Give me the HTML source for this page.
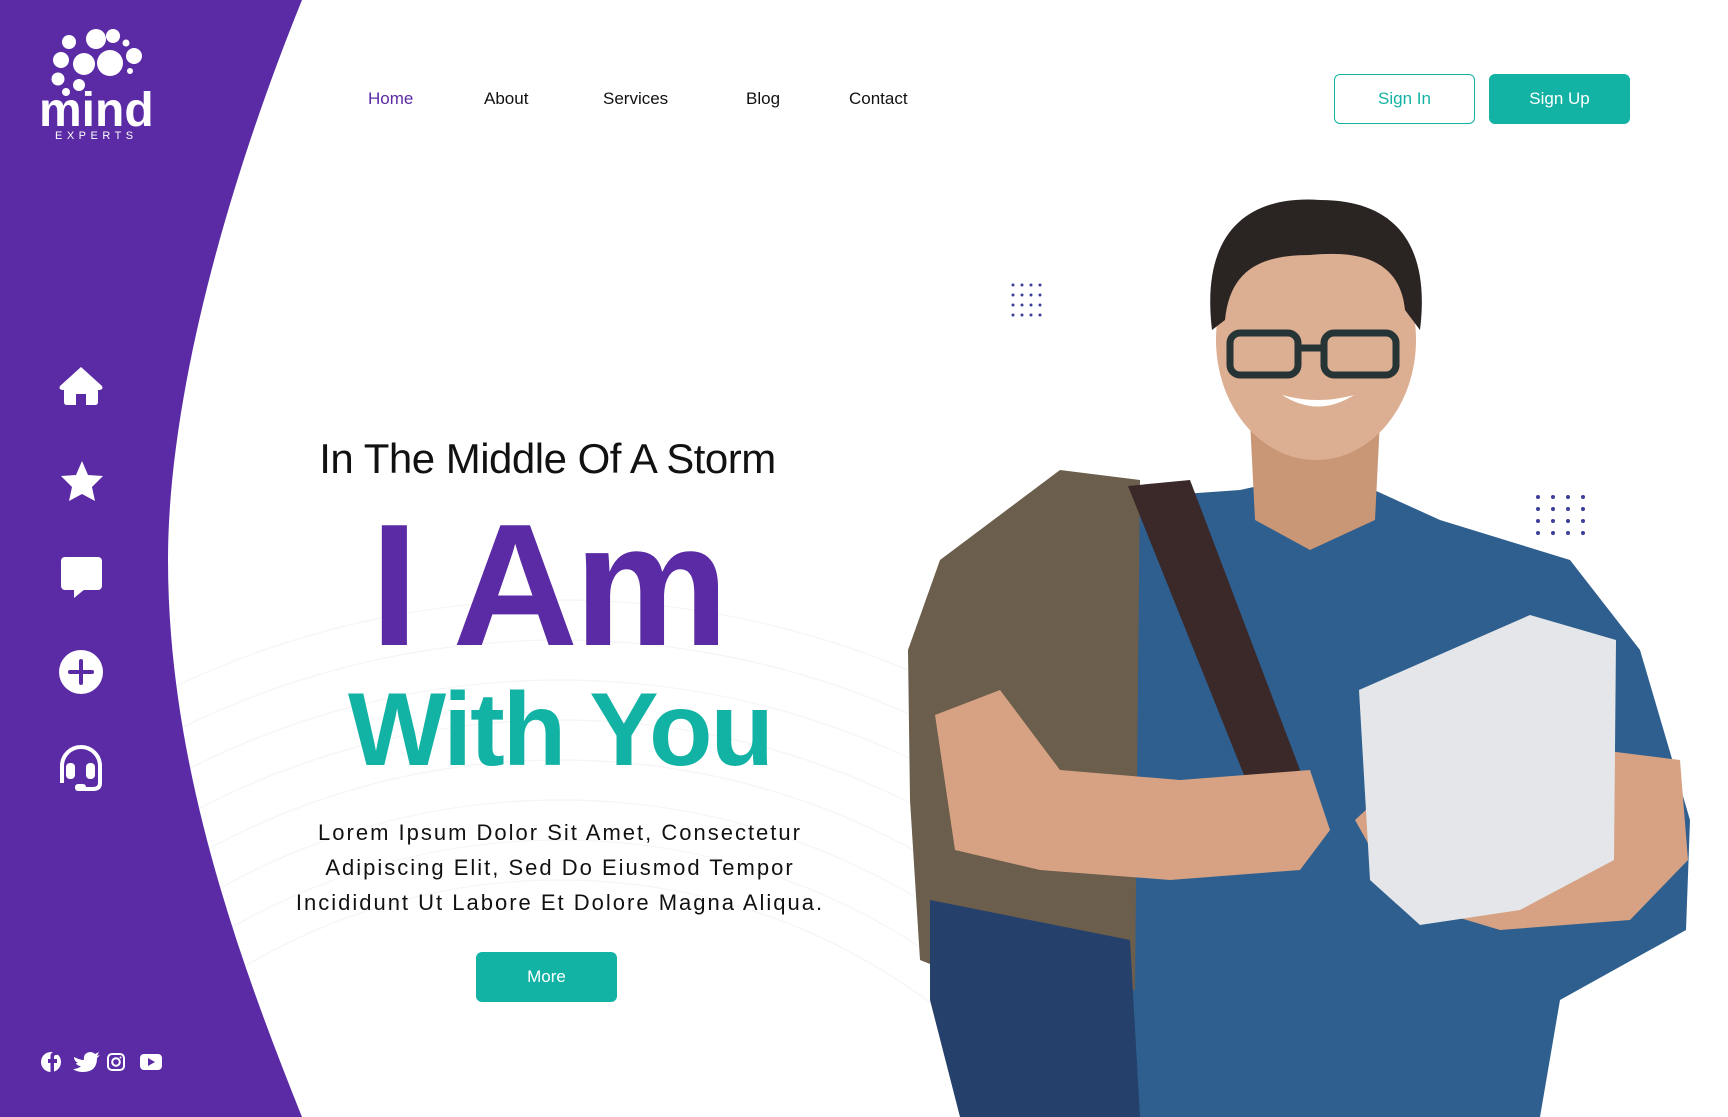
<!DOCTYPE html>
<html><head><meta charset="utf-8"><style>
*{margin:0;padding:0;box-sizing:border-box}
html,body{width:1728px;height:1117px;overflow:hidden}
body{background:#fff;font-family:"Liberation Sans",sans-serif;position:relative}
.abs{position:absolute}
.nav a{position:absolute;top:89px;font-size:17px;color:#111;text-decoration:none}
.btn{position:absolute;border-radius:6px;font-size:17px;display:flex;align-items:center;justify-content:center}
</style></head><body>
<svg class="abs" style="left:0;top:0" width="1728" height="1117">
<g stroke="#f5f5f5" fill="none" stroke-width="1.2">
<circle cx="560" cy="1500" r="900"/><circle cx="560" cy="1500" r="860"/><circle cx="560" cy="1500" r="820"/><circle cx="560" cy="1500" r="780"/><circle cx="560" cy="1500" r="740"/><circle cx="560" cy="1500" r="700"/><circle cx="560" cy="1500" r="660"/><circle cx="560" cy="1500" r="620"/>
</g>
<path d="M0,0 H302 C225,190 168,400 168,560 C168,760 235,950 302,1117 H0 Z" fill="#5a2ba4"/>
<g fill="#fff">
<circle cx="69" cy="42" r="7"/><circle cx="96" cy="39" r="10"/><circle cx="113" cy="36" r="7"/><circle cx="126" cy="43" r="3.5"/>
<circle cx="61" cy="60" r="8"/><circle cx="84" cy="64" r="11"/><circle cx="110" cy="63" r="13"/><circle cx="134" cy="56" r="8"/><circle cx="130" cy="71" r="3"/>
<circle cx="58" cy="79" r="6.5"/><circle cx="79" cy="85" r="6"/><circle cx="66" cy="92" r="4"/>
</g>
<path d="M1000,560 L1100,500 L1240,490 L1330,470 L1440,520 L1570,560 L1640,650 L1690,820 L1686,930 L1560,1000 L1540,1117 L960,1117 L960,800 L930,740 L960,640 Z" fill="#2e5f8e"/>
<path d="M908,650 L940,560 L1060,470 L1140,480 L1135,990 L1020,1000 L920,960 L910,800 Z" fill="#6b5e4c"/>
<path d="M930,900 L1130,940 L1140,1117 L960,1117 L930,1000 Z" fill="#25406b"/>
<path d="M1128,486 L1190,480 L1300,770 L1280,830 L1250,790 Z" fill="#3b2828"/>
<path d="M935,715 L1000,690 L1060,770 L1180,780 L1310,770 L1330,830 L1300,870 L1170,880 L1040,870 L955,850 Z" fill="#d6a283"/>
<path d="M1355,820 L1420,760 L1500,800 L1600,750 L1680,760 L1688,860 L1630,920 L1500,930 L1400,900 Z" fill="#d6a283"/>
<path d="M1359,690 L1530,615 L1616,640 L1614,860 L1520,910 L1420,925 L1370,880 Z" fill="#e4e6e9"/>
<path d="M1250,420 L1380,420 L1375,520 L1310,550 L1255,520 Z" fill="#c99676"/>
<ellipse cx="1316" cy="340" rx="100" ry="120" fill="#dcae92"/>
<path d="M1212,330 C1200,230 1250,195 1320,200 C1400,200 1430,250 1420,330 L1405,310 C1400,260 1360,250 1310,255 C1260,255 1230,270 1225,320 Z" fill="#2a2523"/>
<g fill="none" stroke="#263436" stroke-width="7"><rect x="1230" y="333" width="68" height="42" rx="10"/><rect x="1324" y="333" width="72" height="42" rx="10"/><path d="M1298,348 H1324"/></g>
<path d="M1282,395 Q1318,418 1354,395 Q1318,405 1282,395Z" fill="#fff"/>
<g fill="#3b3f9a">
<g id="g1"><circle cx="1013" cy="285" r="1.5"/><circle cx="1022" cy="285" r="1.5"/><circle cx="1031" cy="285" r="1.5"/><circle cx="1040" cy="285" r="1.5"/></g>
<use href="#g1" y="10"/><use href="#g1" y="20"/><use href="#g1" y="30"/>
<g id="g2"><circle cx="1538" cy="497" r="2"/><circle cx="1553" cy="497" r="2"/><circle cx="1568" cy="497" r="2"/><circle cx="1583" cy="497" r="2"/></g>
<use href="#g2" y="12"/><use href="#g2" y="24"/><use href="#g2" y="36"/>
</g>
<g fill="#fff">
<path d="M81,367 L60,386 Q58,390 64,390 L64,402 Q64,405 67,405 L76,405 L76,394 L86,394 L86,405 L95,405 Q98,405 98,402 L98,390 Q104,390 102,386 Z"/>
<path d="M82,461 L88,475 L103,476 L92,487 L95,501 L82,494 L69,501 L72,487 L61,476 L76,475 Z"/>
<rect x="61" y="557" width="41" height="33" rx="4"/><path d="M74,589 L74,598 L85,589Z"/>
<circle cx="81" cy="672" r="22"/>
</g>
<path d="M81,661 V683 M70,672 H92" stroke="#5a2ba4" stroke-width="4" stroke-linecap="round"/>
<g fill="none" stroke="#fff" stroke-width="4"><path d="M62,783 V766 A19,19 0 0 1 100,766 V783 Q100,789 93,789 H84"/></g>
<g fill="#fff"><rect x="66" y="763" width="9" height="16" rx="4"/><rect x="86" y="763" width="9" height="16" rx="4"/><rect x="75" y="784" width="11" height="7" rx="3"/></g>
<g fill="#fff">
<circle cx="51" cy="1062" r="10"/>
<path d="M74,1057 Q80,1060 84,1060 Q83,1053 90,1052 Q93,1052 95,1054 L99,1052 L97,1056 L100,1055 L97,1058 Q97,1072 83,1072 Q77,1072 73,1069 Q78,1069 81,1066 Q77,1066 76,1063 L78,1063 Q74,1061 74,1057Z"/>
<rect x="140" y="1054" width="22" height="16" rx="4"/>
</g>
<path d="M54,1072 V1063 H57 V1059 H54 V1057 Q54,1055 56,1055 H57.5 V1052 H55 Q50.5,1052 50.5,1056 V1059 H48 V1063 H50.5 V1072Z" fill="#5a2ba4"/>
<rect x="108" y="1054" width="16" height="16" rx="4" fill="none" stroke="#fff" stroke-width="2"/><circle cx="116" cy="1062" r="3.8" fill="none" stroke="#fff" stroke-width="2"/><circle cx="120.5" cy="1057.5" r="1" fill="#fff"/>
<path d="M148,1058 V1066 L155,1062Z" fill="#5a2ba4"/>
</svg>
<div class="abs" style="left:39px;top:88px;font-size:48px;font-weight:bold;color:#fff;letter-spacing:0px;line-height:46px">mind</div>
<div class="abs" style="left:55px;top:130px;font-size:11px;color:#fff;letter-spacing:4.5px">EXPERTS</div>
<div class="nav">
<a style="left:368px;color:#5a2ba4">Home</a><a style="left:484px">About</a><a style="left:603px">Services</a><a style="left:746px">Blog</a><a style="left:849px">Contact</a>
</div>
<div class="btn" style="left:1334px;top:74px;width:141px;height:50px;border:1.5px solid #12b3a4;color:#12b3a4">Sign In</div>
<div class="btn" style="left:1489px;top:74px;width:141px;height:50px;background:#12b3a4;color:#fff">Sign Up</div>
<div class="abs" style="left:300px;width:495px;top:435px;text-align:center;font-size:42px;color:#111;letter-spacing:-0.5px">In The Middle Of A Storm</div>
<div class="abs" style="left:300px;width:495px;top:490px;text-align:center;font-size:174px;font-weight:bold;color:#5a2ba4;line-height:190px;letter-spacing:-4px">I Am</div>
<div class="abs" style="left:300px;width:520px;top:672px;text-align:center;font-size:104px;font-weight:bold;color:#12b3a4;line-height:116px;letter-spacing:-2px">With You</div>
<div class="abs" style="left:270px;width:580px;top:815px;text-align:center;font-size:22px;color:#111;line-height:35px;letter-spacing:2px">Lorem Ipsum Dolor Sit Amet, Consectetur<br>Adipiscing Elit, Sed Do Eiusmod Tempor<br>Incididunt Ut Labore Et Dolore Magna Aliqua.</div>
<div class="btn" style="left:476px;top:952px;width:141px;height:50px;background:#12b3a4;color:#fff">More</div>
</body></html>
